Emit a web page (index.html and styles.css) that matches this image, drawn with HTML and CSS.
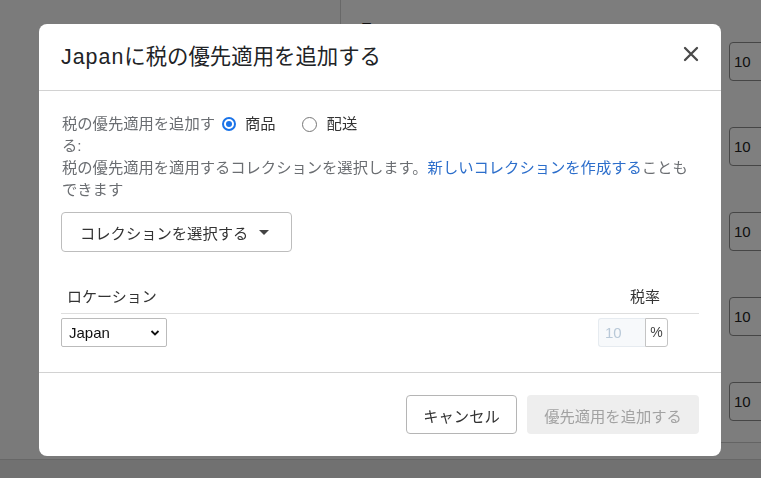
FILE: index.html
```html
<!DOCTYPE html>
<html lang="ja">
<head>
<meta charset="utf-8">
<title>Japanに税の優先適用を追加する</title>
<link rel="stylesheet" href="styles.css">
</head>
<body>
<div class="page">
  <div class="page-main">
    <div class="page-left"></div>
    <div class="page-right">
      <div class="page-heading">Tax</div>
      <div class="bg-row"><span class="bg-input">10</span></div>
      <div class="bg-row"><span class="bg-input">10</span></div>
      <div class="bg-row"><span class="bg-input">10</span></div>
      <div class="bg-row"><span class="bg-input">10</span></div>
      <div class="bg-row last"><span class="bg-input">10</span></div>
    </div>
  </div>
  <div class="page-footer"></div>
</div>

<div class="overlay"></div>

<div class="modal" role="dialog">
  <div class="modal-header">
    <h2 class="modal-title"><span class="latin">Japan</span>に税の優先適用を追加する</h2>
    <button class="close-btn" aria-label="閉じる">
      <svg width="16" height="16" viewBox="0 0 16 16"><path d="M2 2 L14 14 M14 2 L2 14" stroke="#4a4a4a" stroke-width="2.3" stroke-linecap="round"/></svg>
    </button>
  </div>
  <div class="modal-body">
    <div class="type-row">
      <div class="type-label">税の優先適用を追加する:</div>
      <label class="radio-opt"><span class="radio checked"></span>商品</label>
      <label class="radio-opt"><span class="radio"></span>配送</label>
    </div>
    <p class="help">税の優先適用を適用するコレクションを選択します。<a class="link" href="#">新しいコレクションを作成する</a>こともできます</p>
    <button class="select-btn">コレクションを選択する<span class="caret"></span></button>

    <div class="table">
      <div class="thead">
        <div class="th-loc">ロケーション</div>
        <div class="th-rate">税率</div>
      </div>
      <div class="trow">
        <div class="loc-select"><span>Japan</span>
          <svg width="10" height="8" viewBox="0 0 10 8"><path d="M1.5 2 L5 5.5 L8.5 2" stroke="#111" stroke-width="1.8" fill="none"/></svg>
        </div>
        <div class="rate-group">
          <span class="rate-input">10</span><span class="rate-unit">%</span>
        </div>
      </div>
    </div>
  </div>
  <div class="modal-footer">
    <button class="btn btn-cancel">キャンセル</button>
    <button class="btn btn-primary" disabled>優先適用を追加する</button>
  </div>
</div>
</body>
</html>
```

FILE: styles.css
```css
html, body {
  margin: 0;
  padding: 0;
}
body {
  width: 761px;
  height: 478px;
  overflow: hidden;
  font-family: "Liberation Sans", "Noto Sans CJK JP", sans-serif;
  background: #f4f4f4;
  position: relative;
}
.page {
  height: 478px;
  display: flex;
  flex-direction: column;
}
.page-main {
  display: flex;
  height: 459px;
}
.page-left {
  width: 340px;
  height: 430px;
  flex-shrink: 0;
  border-right: 1px solid #d0d0d0;
  background: #f6f6f6;
}
.page-right {
  flex: 1;
  min-width: 0;
  padding-left: 21px;
  background: #fafafa;
  border-bottom: 1px solid #c8c8c8;
  height: 442px;
}
.page-heading {
  padding-top: 20px;
  height: 22px;
  font-size: 15px;
  color: #222;
  line-height: 16px;
}
.bg-row {
  height: 85px;
  display: flex;
  padding-left: 367px;
}
.bg-input {
  display: block;
  flex-shrink: 0;
  width: 60px;
  height: 37px;
  border: 1px solid #8c8c8c;
  border-radius: 4px;
  background: #fff;
  font-size: 15px;
  line-height: 37px;
  padding-left: 4px;
  color: #222;
}
.page-footer {
  flex: 1;
  background: #e2e2e2;
  border-top: 1px solid #cfcfcf;
}
.overlay {
  position: fixed;
  inset: 0;
  background: rgba(0, 0, 0, 0.5);
}
.modal {
  position: fixed;
  left: 39px;
  top: 24px;
  width: 682px;
  height: 432px;
  background: #fff;
  border-radius: 8px;
  display: flex;
  flex-direction: column;
  font-family: "Liberation Sans", "Noto Sans CJK JP", sans-serif;
}
.modal-header {
  height: 66px;
  border-bottom: 1px solid #d2d2d2;
  display: flex;
  align-items: center;
  justify-content: space-between;
  padding: 0 22px 0 22px;
}
.modal-title {
  margin: 0;
  font-size: 21.4px;
  font-weight: normal;
  color: #212326;
  line-height: 28px;
}
.modal-title .latin {
  letter-spacing: 1px;
}
.close-btn {
  border: none;
  background: none;
  padding: 0;
  width: 16px;
  height: 16px;
  margin-top: -7px;
  margin-right: 0;
  display: flex;
}
.modal-body {
  padding: 22px 22px 0 22px;
  font-size: 15.3px;
  line-height: 22px;
  color: #6b6e72;
  height: 259px;
  border-bottom: 1px solid #d2d2d2;
}
.type-row {
  display: flex;
  align-items: flex-start;
}
.type-label {
  width: 157px;
  padding-left: 1px;
}
.radio-opt {
  display: flex;
  align-items: center;
  height: 22px;
  color: #333;
  margin-right: 26px;
}
.radio {
  width: 14px;
  height: 14px;
  box-sizing: border-box;
  border: 1px solid #767676;
  border-radius: 50%;
  margin-right: 9px;
  background: #fff;
  position: relative;
}
.radio-opt:first-of-type .radio {
  margin-left: 3px;
}
.radio-opt + .radio-opt .radio {
  width: 15px;
  height: 15px;
  margin-right: 10px;
}
.radio.checked {
  border: 2px solid #1a73e8;
}
.radio.checked::after {
  content: "";
  position: absolute;
  left: 2px;
  top: 2px;
  width: 6px;
  height: 6px;
  border-radius: 50%;
  background: #1a73e8;
}
.help {
  margin: 0;
  padding-left: 1px;
}
.link {
  color: #2c6ecb;
  text-decoration: none;
}
.select-btn {
  margin-top: 11px;
  width: 231px;
  height: 40px;
  border: 1px solid #bdbdbd;
  border-radius: 4px;
  background: #fff;
  font-family: inherit;
  font-size: 15.3px;
  color: #333;
  text-align: left;
  padding: 0 0 0 18px;
  display: flex;
  align-items: center;
}
.caret {
  width: 0;
  height: 0;
  border-left: 5px solid transparent;
  border-right: 5px solid transparent;
  border-top: 5px solid #444;
  margin-left: 11px;
  margin-top: 1px;
}
.table {
  margin-top: 30px;
}
.thead {
  display: flex;
  justify-content: space-between;
  height: 30px;
  align-items: center;
  border-bottom: 1px solid #dedede;
  color: #333;
  padding-bottom: 1px;
  font-size: 15px;
}
.th-loc {
  padding-left: 6px;
}
.th-rate {
  padding-right: 39px;
}
.trow {
  display: flex;
  justify-content: space-between;
  align-items: center;
  padding-top: 4px;
  padding-right: 31px;
}
.loc-select {
  width: 106px;
  height: 29px;
  box-sizing: border-box;
  border: 1px solid #bbb;
  border-radius: 2px;
  display: flex;
  align-items: center;
  justify-content: space-between;
  padding: 0 6px 0 7px;
  color: #111;
  font-family: "Liberation Sans", Arial, sans-serif;
  font-size: 15px;
}
.rate-group {
  display: flex;
  height: 29px;
}
.rate-input {
  width: 47px;
  box-sizing: border-box;
  border: 1px solid #e6ebf0;
  border-right: none;
  border-radius: 3px 0 0 3px;
  background: #f7f9fb;
  color: #b9c9d8;
  font-size: 15px;
  line-height: 27px;
  padding-left: 6px;
}
.rate-unit {
  width: 23px;
  box-sizing: border-box;
  border: 1px solid #c4c4c4;
  border-radius: 0 3px 3px 0;
  color: #444;
  font-size: 14px;
  line-height: 27px;
  text-align: center;
}
.modal-footer {
  flex: 1;
  display: flex;
  justify-content: flex-end;
  align-items: center;
  padding: 0 22px;
  gap: 10px;
}
.btn {
  height: 39px;
  border-radius: 4px;
  font-family: inherit;
  font-size: 15.3px;
  padding: 0;
}
.btn-cancel {
  width: 111px;
  border: 1px solid #b5b5b5;
  background: #fff;
  color: #333;
}
.btn-primary {
  width: 172px;
  border: none;
  background: #eeeeee;
  color: #a2a2a2;
}
```
